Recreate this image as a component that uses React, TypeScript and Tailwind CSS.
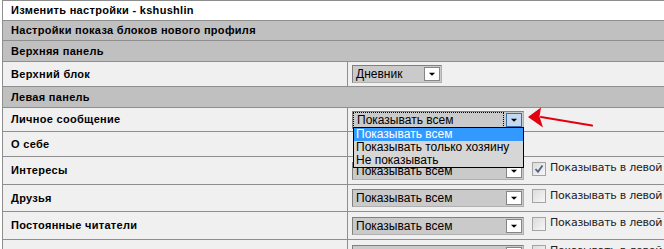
const border = "border-[#8e8e8e]";

function Arrow() {
  return (
    <svg width="16" height="16" viewBox="0 0 16 16" className="block">
      <path d="M4.5 6.5 L11.5 6.5 L8 10 Z" fill="#000" />
    </svg>
  );
}

function Select({
  value,
  wide = true,
  focused = false,
}: {
  value: string;
  wide?: boolean;
  focused?: boolean;
}) {
  return (
    <div
      className={`flex h-[18px] items-stretch border-t border-l border-[#808080] border-r border-b border-r-[#b0b0b0] border-b-[#b0b0b0] bg-[#cacaca] ${
        wide ? "w-[172px]" : "w-[90px]"
      }`}
    >
      <div
        className={`flex flex-1 items-center pl-[3px] text-[12px] leading-none text-black font-['Liberation_Sans',sans-serif] ${
          focused ? "border border-dotted border-black" : ""
        }`}
      >
        {value}
      </div>
      <div
        className={`my-px mr-px ml-[2px] flex w-[16px] items-center justify-center border ${
          focused ? "border-[#3a6ea5] bg-[#c4daf2]" : "border-[#858585] bg-white"
        }`}
      >
        <Arrow />
      </div>
    </div>
  );
}

function Checkbox({ checked }: { checked?: boolean }) {
  return (
    <div className="flex h-[14px] w-[14px] items-center justify-center border border-[#a4a4a4] bg-gradient-to-br from-[#dcdcdc] to-[#f6f6f6]">
      {checked && (
        <svg width="10" height="10" viewBox="0 0 10 10">
          <path d="M1.5 5 L4 7.8 L8.5 1.5" stroke="#4d6185" strokeWidth="1.8" fill="none" />
        </svg>
      )}
    </div>
  );
}

const labelCls =
  "pl-[8px] text-[11px] font-bold tracking-[0.3px] text-black font-['Liberation_Sans',sans-serif]";

function Header({ text, white, h }: { text: string; white?: boolean; h: string }) {
  return (
    <div className={`flex items-center border-b ${border} ${h} ${white ? "bg-white" : "bg-[#c0c0c0]"}`}>
      <span className={labelCls}>{text}</span>
    </div>
  );
}

function Row({
  label,
  h,
  children,
}: {
  label: string;
  h: string;
  children?: React.ReactNode;
}) {
  return (
    <div className={`flex border-b ${border} ${h} bg-[#f0f0f0]`}>
      <div className={`flex w-[344px] items-center ${labelCls}`}>{label}</div>
      <div className={`flex flex-1 items-center gap-[8px] border-l pl-[4px] ${border}`}>{children}</div>
    </div>
  );
}

function Extra({ checked }: { checked?: boolean }) {
  return (
    <div className="flex items-center gap-[4px] -mt-[4px]">
      <Checkbox checked={checked} />
      <span className="text-[11px] tracking-[-0.25px] text-[#222] font-['DejaVu_Sans',sans-serif] whitespace-nowrap">
        Показывать в левой панели
      </span>
    </div>
  );
}

export default function App() {
  return (
    <div className="relative h-[249px] w-[664px] overflow-hidden bg-white">
      <div className={`ml-[2px] w-[720px] border-t border-l ${border}`}>
        <Header text="Изменить настройки - kshushlin" white h="h-[20px]" />
        <Header text="Настройки показа блоков нового профиля" h="h-[20px]" />
        <Header text="Верхняя панель" h="h-[21px]" />
        <Row label="Верхний блок" h="h-[25px]">
          <Select value="Дневник" wide={false} />
        </Row>
        <Header text="Левая панель" h="h-[21px]" />
        <Row label="Личное сообщение" h="h-[24px]">
          <Select value="Показывать всем" focused />
        </Row>
        <Row label="О себе" h="h-[25px]" />
        <Row label="Интересы" h="h-[28px]">
          <Select value="Показывать всем" />
          <Extra checked />
        </Row>
        <Row label="Друзья" h="h-[27px]">
          <Select value="Показывать всем" />
          <Extra />
        </Row>
        <Row label="Постоянные читатели" h="h-[28px]">
          <Select value="Показывать всем" />
          <Extra />
        </Row>
        <Row label="" h="h-[28px]">
          <Select value="Показывать всем" />
          <Extra />
        </Row>
      </div>

      {/* open dropdown list */}
      <div className="absolute left-[353px] top-[127px] w-[171px] border border-black bg-[#d6d6d6] text-[12px] leading-[13px] font-['Liberation_Sans',sans-serif]">
        <div className="bg-[#3399ff] pl-[2px] text-white">Показывать всем</div>
        <div className="pl-[2px] text-black">Показывать только хозяину</div>
        <div className="pl-[2px] text-black">Не показывать</div>
      </div>

      {/* red pointer arrow */}
      <svg className="absolute left-[524px] top-[104px]" width="72" height="28" viewBox="0 0 72 28">
        <path d="M17 13 L68 21.5" stroke="#e3000f" strokeWidth="2.2" strokeLinecap="round" />
        <path d="M4 13 L17 3.5 L15.5 12.5 L19 23.5 Z" fill="#e3000f" />
      </svg>
    </div>
  );
}
